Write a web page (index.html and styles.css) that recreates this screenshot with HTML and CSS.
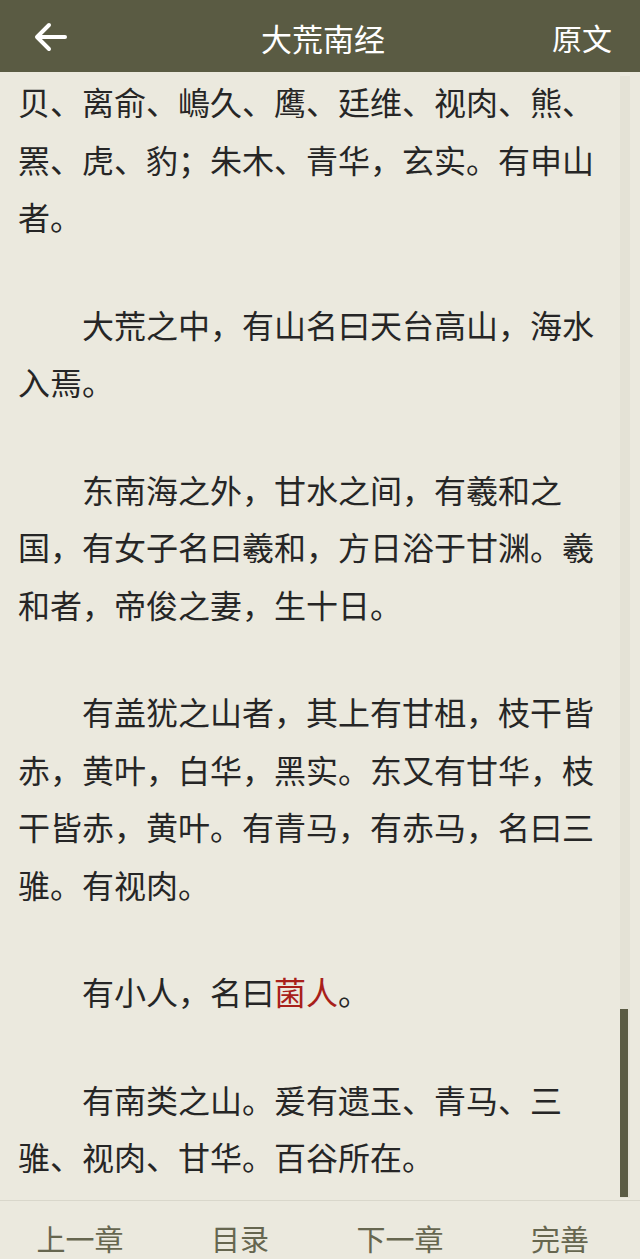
FILE: index.html
```html
<!DOCTYPE html>
<html lang="zh-CN">
<head>
<meta charset="utf-8">
<title>大荒南经</title>
<link rel="stylesheet" href="styles.css">
</head>
<body>
<header class="header">
  <div class="back">
    <svg width="34" height="30" viewBox="0 0 34 30" fill="none" stroke="#fff" stroke-width="4" stroke-linecap="round" stroke-linejoin="round">
      <path d="M31 15H4"/>
      <path d="M15 3L3 15L15 27"/>
    </svg>
  </div>
  <div class="title">大荒南经</div>
  <div class="action">原文</div>
</header>
<main class="content">
  <div class="text">
    <p class="cont">贝、离俞、嶋久、鹰、廷维、视肉、熊、罴、虎、豹；朱木、青华，玄实。有申山者。</p>
    <p>大荒之中，有山名曰天台高山，海水入焉。</p>
    <p>东南海之外，甘水之间，有羲和之国，有女子名曰羲和，方日浴于甘渊。羲和者，帝俊之妻，生十日。</p>
    <p>有盖犹之山者，其上有甘柤，枝干皆赤，黄叶，白华，黑实。东又有甘华，枝干皆赤，黄叶。有青马，有赤马，名曰三骓。有视肉。</p>
    <p>有小人，名曰<span class="hl">菌人</span>。</p>
    <p>有南类之山。爰有遗玉、青马、三骓、视肉、甘华。百谷所在。</p>
  </div>
  <div class="track"><div class="thumb"></div></div>
</main>
<nav class="bottom">
  <div class="nav-item">上一章</div>
  <div class="nav-item">目录</div>
  <div class="nav-item">下一章</div>
  <div class="nav-item">完善</div>
</nav>
</body>
</html>
```
FILE: styles.css
```css
html, body {
  margin: 0;
  padding: 0;
}
body {
  width: 640px;
  height: 1259px;
  overflow: hidden;
  background: #ebe9de;
  font-family: "Noto Sans CJK SC", "Noto Sans", sans-serif;
  display: flex;
  flex-direction: column;
}
.header {
  flex: none;
  height: 72px;
  background: #5a5b43;
  display: grid;
  grid-template-columns: 1fr auto 1fr;
  align-items: center;
  padding: 0 28px 0 34px;
  color: #fff;
}
.back {
  display: flex;
  align-items: center;
  padding-top: 2px;
}
.title {
  font-size: 31px;
  line-height: 1;
  padding-top: 2px;
}
.action {
  justify-self: end;
  font-size: 30px;
  line-height: 1;
  padding-top: 2px;
}
.content {
  flex: none;
  height: 1128px;
  position: relative;
  overflow: hidden;
}
.text {
  padding: 1px 46px 0 18px;
  font-size: 32px;
  line-height: 57.5px;
  color: #262626;
}
.text p {
  margin: 0 0 50px;
  text-indent: 2em;
  line-break: strict;
}
.text p.cont {
  text-indent: 0;
}
.hl {
  color: #a8201a;
}
.track {
  position: absolute;
  right: 10px;
  top: 4px;
  bottom: 2px;
  width: 10px;
  background: #e4e2d6;
}
.thumb {
  position: absolute;
  left: 0;
  top: 933px;
  width: 8px;
  height: 188px;
  background: #5a5b43;
}
.bottom {
  flex: none;
  height: 74px;
  border-top: 1px solid #d9d7cb;
  display: grid;
  grid-template-columns: repeat(4, 1fr);
  align-items: center;
}
.nav-item {
  text-align: center;
  font-size: 29px;
  line-height: 1;
  color: #66664f;
}
```
